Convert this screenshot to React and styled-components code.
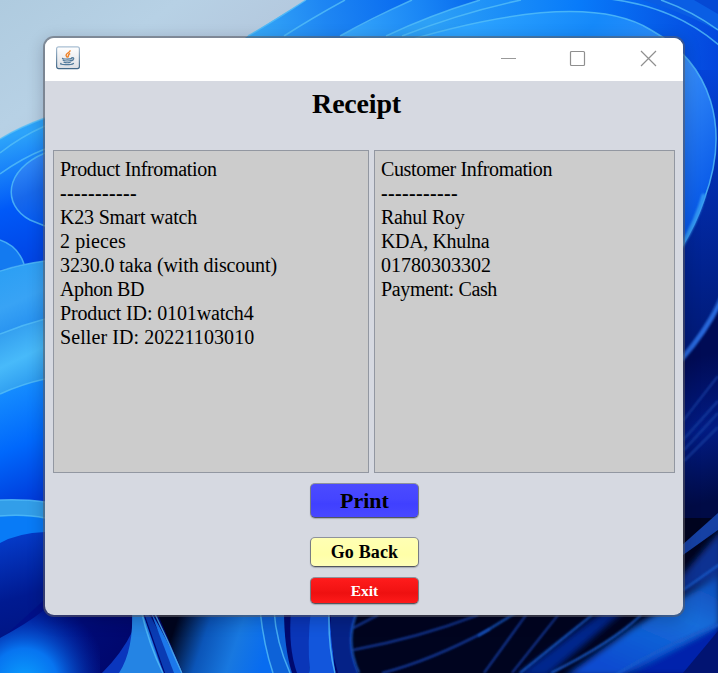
import React from "react";
import styled, { createGlobalStyle } from "styled-components";

const GlobalStyle = createGlobalStyle`
  * { box-sizing: border-box; }
  body { margin: 0; overflow: hidden; }
`;

const Desktop = styled.main`
  display: grid;
  width: 718px;
  height: 673px;
  overflow: hidden;
  font-family: "Liberation Serif", "Times New Roman", serif;
  color: #000;
`;

const WallpaperArt = styled.svg`
  grid-area: 1 / 1;
  display: block;
`;

const Window = styled.section`
  grid-area: 1 / 1;
  z-index: 1;
  margin: 38px 0 0 45px;
  width: 638px;
  height: 577px;
  display: flex;
  flex-direction: column;
  background: #d6d9e1;
  border-radius: 9px;
  box-shadow: 0 0 0 2px rgba(92, 92, 100, 0.55), 0 4px 16px 2px rgba(0, 0, 30, 0.22);
`;

const TitleBar = styled.header`
  display: flex;
  align-items: center;
  justify-content: space-between;
  height: 43px;
  flex: none;
  padding: 0 26px 3px 11px;
  background: #fff;
  border-radius: 9px 9px 0 0;
`;

const Controls = styled.div`
  display: flex;
  align-items: center;
  gap: 54px;
`;

const ControlButton = styled.button`
  display: flex;
  width: 17px;
  height: 17px;
  padding: 0;
  border: 0;
  background: none;
  &:first-child { margin-right: -2px; }
`;

const Heading = styled.h1`
  margin: 0;
  height: 69px;
  padding: 6px 0 0;
  text-align: center;
  font-size: 28px;
  line-height: 34px;
  font-weight: 700;
  letter-spacing: -0.2px;
  text-indent: -15px;
`;

const Panels = styled.div`
  display: grid;
  grid-template-columns: 316px 301px;
  gap: 5px;
  height: 323px;
  margin-left: 8px;
`;

const Panel = styled.div`
  border: 1px solid #9297a1;
  background: #ccc;
  padding: 6px 6px;
`;

const Line = styled.div`
  font-size: 20px;
  line-height: 24px;
  white-space: pre;
  letter-spacing: ${(p) => p.$spacing || 0}px;
`;

const Divider = styled(Line)`
  font-weight: 700;
`;

const Actions = styled.div`
  display: flex;
  flex-direction: column;
  width: 109px;
  margin: 10px 0 0 265px;
`;

const tones = {
  blue: { fill: "linear-gradient(#4b4bff, #4545ff 45%, #4040ff 60%, #4848ff)", ink: "#000" },
  yellow: { fill: "linear-gradient(#ffffb4, #ffffa8 60%, #ffffb8)", ink: "#000" },
  red: { fill: "linear-gradient(#ff1c1c, #f41414 45%, #ee1010 60%, #ff1a1a)", ink: "#fff" },
};

const ActionButton = styled.button`
  height: ${(p) => p.$height}px;
  margin: 0 0 ${(p) => p.$gap || 0}px;
  padding: 0;
  border: 1px solid #777b83;
  border-top-color: #8e929c;
  border-bottom-color: #53565e;
  border-radius: 5px;
  background: ${(p) => tones[p.$tone].fill};
  color: ${(p) => tones[p.$tone].ink};
  font: 700 ${(p) => p.$size}px "Liberation Serif", "Times New Roman", serif;
  letter-spacing: ${(p) => p.$spacing || 0}px;
  box-shadow: 0 1px 1px rgba(80, 85, 95, 0.35);
`;

const JavaIcon = () => (
  <svg width="24" height="24" viewBox="0 0 24 24" fill="none" aria-hidden="true">
    <defs>
      <linearGradient id="javaFrame" x2="0" y2="1">
        <stop stopColor="#a9bfd3" />
        <stop offset="1" stopColor="#426888" />
      </linearGradient>
      <linearGradient id="javaFace" x2="0" y2="1">
        <stop stopColor="#fff" />
        <stop offset="1" stopColor="#dcdfe4" />
      </linearGradient>
    </defs>
    <rect x=".6" y=".8" width="22.8" height="21.8" rx="2" fill="url(#javaFace)" stroke="url(#javaFrame)" strokeWidth="1.2" />
    <path d="M14 4.2c.8 2-3.7 2.8-3.900 4.900-.1 1.200 1.200 1.700 1.200 2.700M14.200 7.500c-2.800 1-1 2.400-2.500 3.800" stroke="#ef8126" strokeWidth="1.400" />
    <path d="M6.500 12.300c-.5.900 7.500 1 9.500.1M7.200 14.300c1 .9 7 .9 8.200 0M8 16.200c1.500.7 5 .7 6.300 0M15.600 11.800c3.400-1 2.300 2.500-.5 3.100M5 17.300c-2.500 1.500 9.500 2.200 12.500.1" stroke="#517a9b" strokeWidth="1.200" strokeLinecap="round" />
  </svg>
);

// Each gradient: id, x1, y1, x2, y2 in wallpaper pixels, followed by its colour stops.
const gradients = [
  ["sky", 0, 0, 120, 170, "#afcbdf", "#b7d1e5", "#b3c6dc"],
  ["topA", 250, 30, 400, 0, "#36a9f8", "#1e86f3", "#0a6df0"],
  ["topB", 350, 36, 500, 0, "#35a6fb", "#1985f5", "#005fea"],
  ["topC", 430, 30, 718, 60, "#2da0f6", "#087bfa", "#0446dd"],
  ["bigPetal", 470, 25, 710, 200, "#2ca3ff", "#1589fa", "#368df9", "#0758e8"],
  ["rightDeep", 700, 60, 718, 340, "#0446dd", "#022aa5", "#001a78"],
  ["rightNavy", 684, 360, 718, 500, "#000b55", "#021b83", "#000b46"],
  ["leftTop", 0, 140, 40, 270, "#2ca3fa", "#0059f8", "#0041e1"],
  ["leftOval", 12, 160, 44, 230, "#358ffa", "#1768eb", "#0056f2"],
  ["leftA", 0, 270, 30, 335, "#2c9ff4", "#38a3f5", "#218cef"],
  ["leftB", 0, 330, 30, 392, "#319cee", "#48bafa", "#2795ed"],
  ["leftC", 0, 390, 44, 500, "#168eff", "#0068fc", "#0039d9"],
  ["leftD", 0, 520, 44, 673, "#0645da", "#001a91", "#001078"],
  ["lowNavy", 44, 620, 130, 673, "#001088", "#000a74", "#00066a"],
  ["lowPetal", 172, 635, 262, 665, "#00051d", "#0b55b8", "#1878e0", "#086cf0"],
  ["bright", 620, 673, 680, 535, "#074bd0", "#176dda", "#0a39a7"],
];

const PETAL_EDGE = "M386 47C510 8 601 -1 651 30C712 64 731 128 704 200Q695 226 681 248";

const folds = [
  ["M248 36L306 0H420V60H210Z", "topA", "M248 36Q276 20 306 0"],
  ["M284 36L345 0H450V60Z", "topA", "M284 36Q312 18 345 0"],
  ["M340 36L412 0H570V60Z", "topB", "M340 36Q370 19 412 0"],
  ["M386 36Q430 15 480 0H718V70Z", "topC", "M386 36Q430 15 480 0"],
  ["M402 36Q455 15 521 0H718V140H640Z", "topC", "M402 36Q460 13 521 0"],
  ["M600 -2Q672 4 720 46V120H660Z", "topC", "M600 -2Q672 4 720 46"],
  ["M642 0H718V31Q688 14 642 0Z", "#0a5ee4", "M661 0Q692 11 718 30"],
  ["M694 0H718V14Z", "#0549d4", null],
  ["M683 70H718V400H683Z", "rightDeep", null],
  [`${PETAL_EDGE}V60Z`, "bigPetal", PETAL_EDGE],
  ["M683 355Q706 330 718 300V520H683Z", "rightNavy", null],
  ["M0 139Q20 127 45 118V280H0Z", "leftTop", "M0 139Q20 127 45 118"],
  ["M0 174Q22 158 45 149V270H0Z", "leftTop", "M0 153Q20 137 45 126M0 174Q22 158 45 149"],
  ["M45 153C4 170 2 205 30 220L45 226Z", "leftOval", "M45 153C4 170 2 205 30 220L45 226"],
  ["M0 240Q18 246 24 264L0 270Z", "#137af0", "M0 240Q18 246 24 264"],
  ["M0 271Q22 264 45 261V335H0Z", "leftA", "M0 271Q22 264 45 261"],
  ["M0 334Q22 325 45 319V394H0Z", "leftB", "M0 334Q22 325 45 319"],
  ["M0 394Q22 384 45 379V505H0Z", "leftC", "M0 394Q22 384 45 379"],
  ["M0 500Q25 499 45 502V520H0Z", "#329ee9", "M0 500Q25 499 45 502"],
  ["M0 516Q25 514 45 518V545H0Z", "#087bf7", "M0 516Q25 514 45 518"],
  ["M0 543Q18 533 45 532V673H0Z", "leftD", null],
  ["M44 600H360V673H0V640Z", "lowNavy", null],
  ["M0 638Q28 623 44 610L100 610V673H0Z", "lowGlow", null],
  ["M132 608V632Q122 653 102 673H164L141 608Z", "#0a36bd", null],
  ["M132 608Q134 650 119 673H163L141 608Z", "#2484e4", "M141 610Q149 645 163 673"],
  ["M143 610L151 617L180 673H165Z", "#0a3cb4", null],
  ["M150 610Q168 641 182 673H174Z", "#1c78eb", "M155 614Q169 643 182 673"],
  ["M156 610H266L273 673H183Z", "lowPetal", null],
  ["M260 610Q264 647 273 673H310L305 610Z", "#0d62d8", "M260 610Q264 647 273 673M274 610Q276 642 290 673"],
  ["M284 610Q284 648 292 673H309L312 610Z", "#000a70", null],
  ["M291 610Q288 648 297 673H309L313 610Z", "#0a36b8", null],
  ["M311 610Q307 642 310 673H335L329 610Z", "#1256dc", "M329 610Q328 646 335 673"],
  ["M331 610Q329 645 338 673H358Q346 640 358 610Z", "#052287", null],
];

const shade = (name) => (name.startsWith("#") ? name : `url(#${name})`);

const Wallpaper = () => (
  <WallpaperArt width="718" height="673" viewBox="0 0 718 673" aria-hidden="true">
    <defs>
      {gradients.map(([id, x1, y1, x2, y2, ...stops]) => (
        <linearGradient key={id} id={id} gradientUnits="userSpaceOnUse" x1={x1} y1={y1} x2={x2} y2={y2}>
          {stops.map((color, i) => (
            <stop key={i} offset={i / (stops.length - 1)} stopColor={color} />
          ))}
        </linearGradient>
      ))}
      <radialGradient id="lowGlow" gradientUnits="userSpaceOnUse" cx="24" cy="682" r="84">
        <stop stopColor="#0aa0ff" />
        <stop offset=".4" stopColor="#0774f0" />
        <stop offset="1" stopColor="#0428b4" stopOpacity="0" />
      </radialGradient>
      <filter id="soften" x="-20%" y="-20%" width="140%" height="140%"><feGaussianBlur stdDeviation="3" /></filter>
      <filter id="softLine" x="-20%" y="-20%" width="140%" height="140%"><feGaussianBlur stdDeviation="1" /></filter>
    </defs>
    <path d="M0 0H718V673H0Z" fill="url(#sky)" />
    {folds.map(([area, fill, edge], i) => (
      <g key={i}>
        <path d={area} fill={shade(fill)} />
        {edge && <path d={edge} fill="none" stroke="#54bef8" strokeWidth="1.5" strokeOpacity=".8" />}
      </g>
    ))}
    <path d="M358 600H718V673H358Q344 640 358 610ZM683 518H718V673H683Z" fill="#00041f" />
    <g fill="none" filter="url(#softLine)">
      <path d="M681 247Q697 220 704 194" stroke="#3297f4" strokeWidth="4" />
      <path d="M681 360Q710 326 722 297" stroke="#2767db" strokeWidth="5" />
    </g>
    <g fill="none" stroke="#163b9e" strokeWidth="2" filter="url(#softLine)">
      <path d="M683 421L718 376M683 440L718 401M684 450L718 413M684 461L718 427" />
      <path d="M353 628L378 615M353 650Q418 638 478 615M382 673Q430 661 490 629M484 673L526 615M512 673L558 615" />
    </g>
    <path d="M681 546L718 513V530L683 555Z" fill="#1641a4" />
    <g filter="url(#soften)">
      <path d="M516 676L604 610H625L547 676Z" fill="#06278d" />
      <path d="M680 578L722 529V573L680 594Z" fill="#103292" />
      <path d="M632 628L720 574V627L622 676H565Z" fill="url(#bright)" />
      <path d="M625 676L720 624V676Z" fill="#0221ac" />
    </g>
    <g fill="none" stroke="#1b5ccb" strokeWidth="2" filter="url(#softLine)">
      <path d="M478 636L517 612M520 673L592 615M551 673Q613 642 641 615M683 590L720 564M615 675Q668 643 720 624" />
      <path d="M358 610Q344 641 359 673" />
    </g>
    <path d="M683 673L718 631V673Z" fill="#021472" />
  </WallpaperArt>
);

const productLines = [
  ["K23 Smart watch", -0.2],
  ["2 pieces", 0.1],
  ["3230.0 taka (with discount)", -0.11],
  ["Aphon BD", -0.4],
  ["Product ID: 0101watch4", -0.14],
  ["Seller ID: 20221103010", 0.08],
];
const customerLines = [
  ["Rahul Roy", -0.3],
  ["KDA, Khulna", -0.36],
  ["01780303302", 0],
  ["Payment: Cash", -0.35],
];

const InfoPanel = ({ title, tracking, lines }) => (
  <Panel>
    <Line $spacing={tracking}>{title}</Line>
    <Divider $spacing={0.34}>-----------</Divider>
    {lines.map(([text, spacing]) => (
      <Line key={text} $spacing={spacing}>{text}</Line>
    ))}
  </Panel>
);

export default function App() {
  return (
    <Desktop>
      <GlobalStyle />
      <Wallpaper />
      <Window>
        <TitleBar>
          <JavaIcon />
          <Controls>
            <ControlButton aria-label="Minimize">
              <svg width="17" height="17"><path d="M1 8.500H16" stroke="#999" /></svg>
            </ControlButton>
            <ControlButton aria-label="Maximize">
              <svg width="17" height="17"><rect x="1.500" y="1.500" width="14" height="14" rx="1" fill="none" stroke="#8f8f8f" strokeWidth="1.200" /></svg>
            </ControlButton>
            <ControlButton aria-label="Close">
              <svg width="17" height="17"><path d="M1 1L16 16M16 1L1 16" stroke="#8f8f8f" strokeWidth="1.200" /></svg>
            </ControlButton>
          </Controls>
        </TitleBar>
        <Heading>Receipt</Heading>
        <Panels>
          <InfoPanel title="Product Infromation" tracking={-0.32} lines={productLines} />
          <InfoPanel title="Customer Infromation" tracking={-0.36} lines={customerLines} />
        </Panels>
        <Actions>
          <ActionButton $tone="blue" $height={35} $size={22} $gap={19}>Print</ActionButton>
          <ActionButton $tone="yellow" $height={30} $size={18} $spacing={0.15} $gap={10}>Go Back</ActionButton>
          <ActionButton $tone="red" $height={27} $size={15.5}>Exit</ActionButton>
        </Actions>
      </Window>
    </Desktop>
  );
}
